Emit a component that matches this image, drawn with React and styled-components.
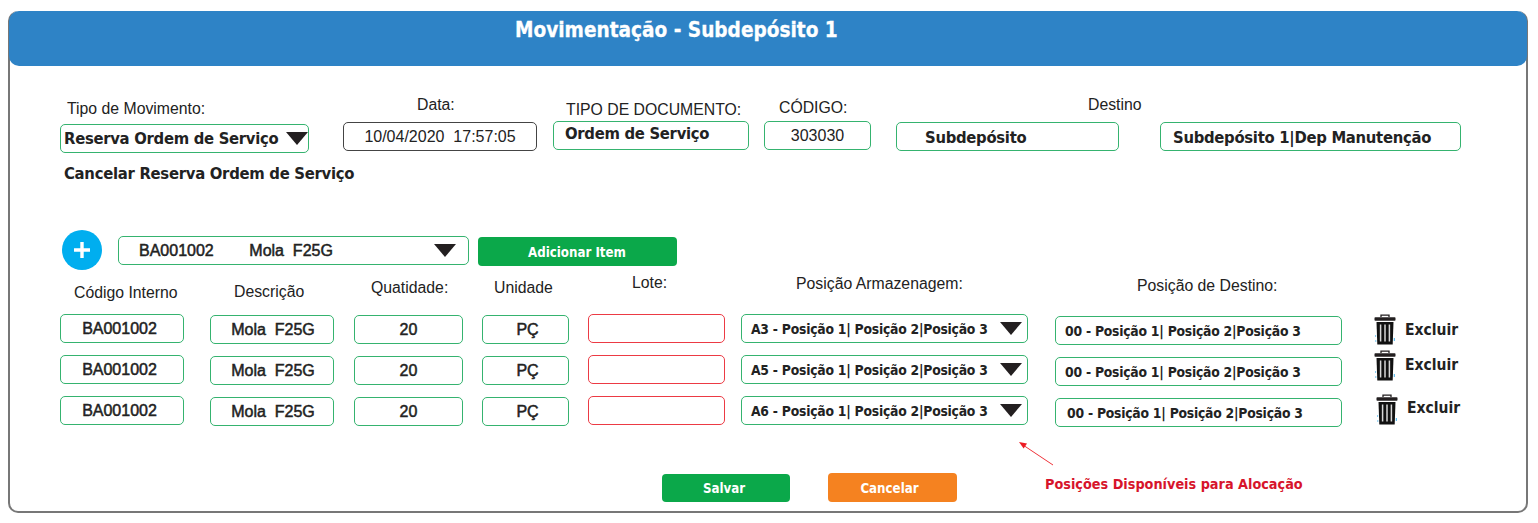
import React from "react";
import styled, { createGlobalStyle } from "styled-components";

const Global = createGlobalStyle`
  html, body { margin: 0; padding: 0; background: #fff; }
  body { font-family: "Liberation Sans", Arial, sans-serif; color: #222; }
`;

const Panel = styled.main`
  box-sizing: border-box;
  width: 1520px;
  height: 502px;
  margin: 11px 0 0 8px;
  border: 2px solid #777;
  border-top: 0;
  border-radius: 10px;
  display: flex;
  flex-direction: column;
`;
const Header = styled.header`
  height: 55px;
  margin: 0 -1px 0 -1px;
  background: #2e83c6;
  border-radius: 10px;
  display: flex;
  justify-content: flex-start;
  padding: 7px 0 0 506px;
  box-sizing: border-box;
`;
const Title = styled.h1`
  margin: 0;
  font: 700 20.6px/24px "DejaVu Sans", sans-serif;
  font-stretch: condensed;
  color: #fff;
  -webkit-text-stroke: 0.3px #fff;
`;
const Body = styled.div`
  padding: 30px 0 0 50px;
  display: flex;
  flex-direction: column;
`;
const TopRow = styled.div`
  display: flex;
  align-items: flex-start;
  height: 57px;
`;
const Field = styled.div`
  width: ${p => p.$w}px;
  margin-left: ${p => p.$ml || 0}px;
  padding-top: ${p => p.$pt}px;
  display: flex;
  flex-direction: column;
`;
const Label = styled.label`
  display: block;
  font-size: 15.8px;
  line-height: 16px;
  height: 16px;
  white-space: nowrap;
  color: #222;
  padding-left: ${p => p.$x || 0}px;
  margin-bottom: ${p => p.$gap || 0}px;
`;
const borders = { green: "#35b36f", red: "#ec3a44", dark: "#444" };
const Box = styled.div`
  box-sizing: border-box;
  height: 29px;
  width: ${p => (p.$w ? p.$w + "px" : "100%")};
  border: 1px solid ${p => borders[p.$tone || "green"]};
  border-radius: 5px;
  background: #fff;
  display: flex;
  align-items: center;
  justify-content: ${p => (p.$center ? "center" : "flex-start")};
  padding-left: ${p => p.$pl || 0}px;
  padding-right: ${p => p.$pr || 0}px;
  padding-top: ${p => p.$pt || 0}px;
  padding-bottom: ${p => p.$pb || 0}px;
  white-space: nowrap;
`;
const Strong = styled.span`
  font: 700 ${p => (p.$size || 16) * 1.03}px/20px "DejaVu Sans", sans-serif;
  font-stretch: condensed;
  letter-spacing: -0.017em;
  color: #222;
  white-space: pre;
`;
const Plain = styled.span`
  font-size: 16px;
  color: #222;
  white-space: pre;
`;
const Heavy = styled.span`
  font-size: 16px;
  line-height: 20px;
  color: #222;
  white-space: pre;
  -webkit-text-stroke: 0.5px #222;
`;
const Caret = styled.i`
  width: 0;
  height: 0;
  margin-left: auto;
  flex: none;
  border-left: 11px solid transparent;
  border-right: 11px solid transparent;
  border-top: 13px solid #231f20;
`;
const CancelLine = styled.p`
  margin: 11px 0 0 4px;
  height: 20px;
  font: 700 16.5px/20px "DejaVu Sans", sans-serif;
  font-stretch: condensed;
  letter-spacing: -0.017em;
  color: #222;
`;
const AddRow = styled.div`
  display: flex;
  align-items: flex-start;
  margin-top: 46px;
  height: 40px;
`;
const PlusButton = styled.button`
  width: 40px;
  height: 40px;
  margin-left: 2px;
  padding: 0;
  border: 0;
  border-radius: 50%;
  background: #00aeef;
  display: flex;
  align-items: center;
  justify-content: center;
`;
const Picker = styled(Box)`
  margin: 6px 0 0 16px;
`;
const ActionButton = styled.button`
  box-sizing: border-box;
  width: ${p => p.$w}px;
  height: ${p => p.$h || 29}px;
  margin-top: ${p => p.$mt || 0}px;
  margin-left: ${p => p.$ml || 0}px;
  padding: 2px ${p => p.$pr || 0}px 0 0;
  border: 0;
  border-radius: 4px;
  background: ${p => p.$bg};
  color: #fff;
  font: 700 13.2px/18px "DejaVu Sans", sans-serif;
  font-stretch: condensed;
`;
const HeadRow = styled.div`
  display: flex;
  align-items: flex-start;
  margin-top: 5px;
  height: 26px;
`;
const HeadCell = styled.div`
  width: ${p => p.$w}px;
  margin-left: ${p => p.$ml}px;
  margin-top: ${p => p.$mt}px;
`;
const Rows = styled.div`
  display: flex;
  flex-direction: column;
  gap: 10px;
  margin-top: 13px;
`;
const Row = styled.div`
  display: flex;
  align-items: flex-start;
  height: 31px;
`;
const Cell = styled(Box)`
  flex: none;
  margin-left: ${p => p.$ml || 0}px;
  margin-top: ${p => p.$mt || 0}px;
`;
const Remove = styled.div`
  display: flex;
  align-items: flex-start;
  margin-top: ${p => p.$mt}px;
  margin-left: ${p => p.$ml}px;
`;
const RemoveText = styled.span`
  margin-left: 9px;
  margin-top: ${p => p.$mt}px;
  font: 700 15.5px/20px "DejaVu Sans", sans-serif;
  font-stretch: condensed;
  color: #222;
`;
const Footer = styled.footer`
  display: flex;
  align-items: flex-start;
  margin-top: 46px;
  padding-left: 602px;
`;
const Note = styled.div`
  position: relative;
  margin: 1px 0 0 88px;
  font: 700 14.3px/20px "DejaVu Sans", sans-serif;
  font-stretch: condensed;
  color: #d7142b;
  white-space: nowrap;
`;
const NoteArrow = styled.svg`
  position: absolute;
  left: -27px;
  top: -33px;
`;

const Trash = () => (
  <svg width="22" height="31" viewBox="0 0 22 31">
    <path d="M7 3V1.2h8V3" fill="none" stroke="#231f20" strokeWidth="1.3" />
    <rect x="0.5" y="3.2" width="21" height="3.6" rx="0.8" fill="#231f20" />
    <path d="M2.5 8h17l-0.8 22.5H3.3z" fill="#111" />
    <path d="M6.6 10.5v17M11 10.5v17M15.4 10.5v17" stroke="#d8d8d8" strokeWidth="1.5" />
    <path d="M1.6 21v2M1.8 26v2" stroke="#59b7ea" strokeWidth="0.8" />
    <path d="M20.3 24v3" stroke="#29a8e8" strokeWidth="0.9" />
  </svg>
);

const cols = [
  { key: "code", w: 124, ml: 0, label: "Código Interno", lx: 14, lt: 10 },
  { key: "desc", w: 124, ml: 26, label: "Descrição", lx: 24, lt: 9 },
  { key: "qty", w: 109, ml: 20, label: "Quatidade:", lx: 17, lt: 5 },
  { key: "unit", w: 87, ml: 19, label: "Unidade", lx: 12, lt: 5 },
  { key: "lot", w: 137, ml: 19, label: "Lote:", lx: 44, lt: 0 },
  { key: "pos", w: 287, ml: 16, label: "Posição Armazenagem:", lx: 55, lt: 1 },
  { key: "dest", w: 287, ml: 27, label: "Posição de Destino:", lx: 82, lt: 3 },
];

const rows = [
  { id: "A3", dest: 9, trashTop: 0, trashLeft: 32, textTop: 6 },
  { id: "A5", dest: 9, trashTop: -5, trashLeft: 32, textTop: 5 },
  { id: "A6", dest: 11, trashTop: -2, trashLeft: 34, textTop: 4 },
];

export default function App() {
  return (
    <>
      <Global />
      <Panel>
        <Header>
          <Title>Movimentação - Subdepósito 1</Title>
        </Header>
        <Body>
          <TopRow>
            <Field $w={249} $pt={5}>
              <Label $x={7} $gap={7}>Tipo de Movimento:</Label>
              <Box $pl={3}>
                <Strong>Reserva Ordem de Serviço</Strong>
                <Caret />
              </Box>
            </Field>
            <Field $w={194} $ml={34} $pt={1}>
              <Label $x={74} $gap={9}>Data:</Label>
              <Box $tone="dark" $center><Plain>10/04/2020  17:57:05</Plain></Box>
            </Field>
            <Field $w={196} $ml={16} $pt={6}>
              <Label $x={13} $gap={3}>TIPO DE DOCUMENTO:</Label>
              <Box $pl={11} $pb={3}><Strong>Ordem de Serviço</Strong></Box>
            </Field>
            <Field $w={107} $ml={15} $pt={4}>
              <Label $x={15} $gap={5}>CÓDIGO:</Label>
              <Box $center><Plain>303030</Plain></Box>
            </Field>
            <Field $w={223} $ml={25} $pt={1}>
              <Label $x={192} $gap={9}>Destino</Label>
              <Box $pl={28} $pt={2}><Strong>Subdepósito</Strong></Box>
            </Field>
            <Field $w={301} $ml={41} $pt={26}>
              <Box $pl={12} $pt={2}><Strong>Subdepósito 1|Dep Manutenção</Strong></Box>
            </Field>
          </TopRow>
          <CancelLine>Cancelar Reserva Ordem de Serviço</CancelLine>
          <AddRow>
            <PlusButton aria-label="Adicionar">
              <svg width="22" height="22" viewBox="0 0 22 22">
                <path d="M11 3v16M3 11h16" stroke="#fff" strokeWidth="3.4" />
              </svg>
            </PlusButton>
            <Picker $w={351} $pl={20} $pr={12}>
              <Heavy>BA001002        Mola  F25G</Heavy>
              <Caret />
            </Picker>
            <ActionButton $w={199} $ml={9} $mt={7} $pr={1} $bg="#0ba84a">Adicionar Item</ActionButton>
          </AddRow>
          <HeadRow>
            {cols.map(c => (
              <HeadCell key={c.key} $w={c.w} $ml={c.ml} $mt={c.lt}>
                <Label $x={c.lx}>{c.label}</Label>
              </HeadCell>
            ))}
          </HeadRow>
          <Rows>
            {rows.map(r => (
              <Row key={r.id}>
                <Cell $w={124} $center $pr={5}><Heavy>BA001002</Heavy></Cell>
                <Cell $w={124} $ml={26} $mt={1} $center $pl={2}><Heavy>Mola  F25G</Heavy></Cell>
                <Cell $w={109} $ml={20} $mt={1} $center><Heavy>20</Heavy></Cell>
                <Cell $w={87} $ml={19} $mt={1} $center $pl={4}><Heavy>PÇ</Heavy></Cell>
                <Cell $w={137} $ml={19} $tone="red" />
                <Cell $w={287} $ml={16} $pl={9} $pr={5}>
                  <Strong $size={13.4}>{r.id} - Posição 1| Posição 2|Posição 3</Strong>
                  <Caret />
                </Cell>
                <Cell $w={287} $ml={27} $mt={2} $pl={r.dest}>
                  <Strong $size={13.4}>00 - Posição 1| Posição 2|Posição 3</Strong>
                </Cell>
                <Remove $mt={r.trashTop} $ml={r.trashLeft}>
                  <Trash />
                  <RemoveText $mt={r.textTop}>Excluir</RemoveText>
                </Remove>
              </Row>
            ))}
          </Rows>
          <Footer>
            <ActionButton $w={128} $h={28} $mt={1} $pr={4} $bg="#0ba84a">Salvar</ActionButton>
            <ActionButton $w={129} $ml={38} $pr={6} $bg="#f58220">Cancelar</ActionButton>
            <Note>
              <NoteArrow width="38" height="26" viewBox="0 0 38 26">
                <path d="M35 24L5 4" stroke="#ed1c24" strokeWidth="0.9" />
                <path d="M1 1l8 1.6-3.4 5z" fill="#ed1c24" />
              </NoteArrow>
              Posições Disponíveis para Alocação
            </Note>
          </Footer>
        </Body>
      </Panel>
    </>
  );
}
